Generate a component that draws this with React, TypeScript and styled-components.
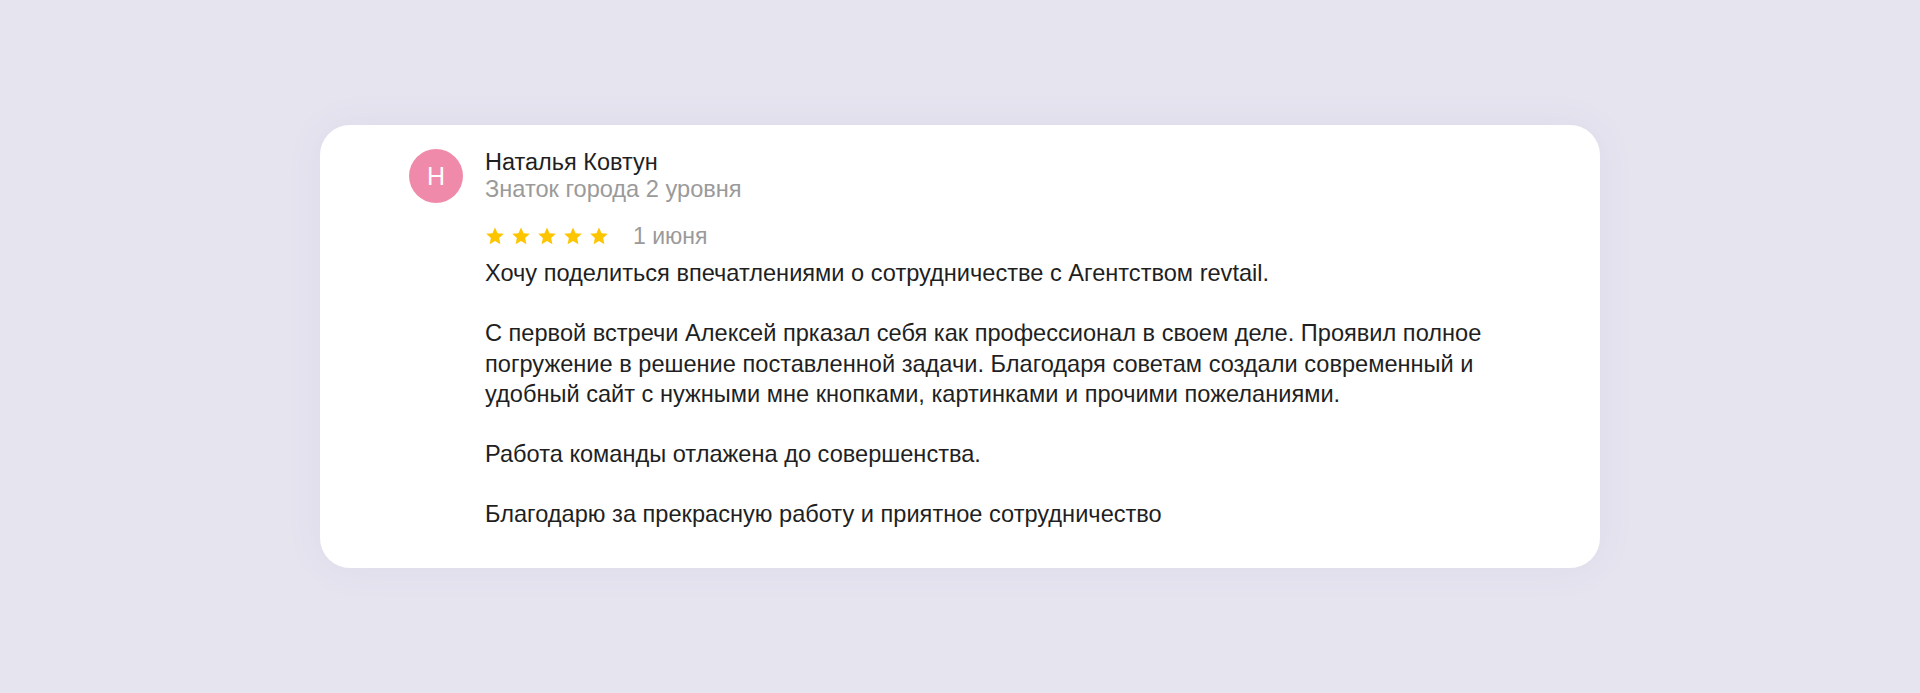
import React from "react";
import styled, { createGlobalStyle } from "styled-components";

const GlobalStyle = createGlobalStyle`
  html, body {
    margin: 0;
    padding: 0;
    background: #e6e4ef;
  }
  * {
    box-sizing: border-box;
  }
`;

const review = {
  author: "Наталья Ковтун",
  initial: "Н",
  level: "Знаток города 2 уровня",
  rating: 5,
  date: "1 июня",
  paragraphs: [
    "Хочу поделиться впечатлениями о сотрудничестве с Агентством revtail.",
    "С первой встречи Алексей прказал себя как профессионал в своем деле. Проявил полное погружение в решение поставленной задачи. Благодаря советам создали современный и удобный сайт с нужными мне кнопками, картинками и прочими пожеланиями.",
    "Работа команды отлажена до совершенства.",
    "Благодарю за прекрасную работу и приятное сотрудничество",
  ],
};

function Star() {
  return (
    <StarSvg viewBox="0 0 24 24">
      <path d="M12 1.8l3.05 6.9 7.5.72-5.66 4.98 1.66 7.36L12 17.9l-6.55 3.86 1.66-7.36L1.45 9.42l7.5-.72z" />
    </StarSvg>
  );
}

export default function App() {
  return (
    <Page>
      <GlobalStyle />
      <Card>
        <Avatar>{review.initial}</Avatar>
        <Body>
          <Author>{review.author}</Author>
          <Level>{review.level}</Level>
          <RatingRow>
            <Stars>
              {Array.from({ length: review.rating }).map((_, i) => (
                <Star key={i} />
              ))}
            </Stars>
            <DateText>{review.date}</DateText>
          </RatingRow>
          <Text>
            {review.paragraphs.map((p, i) => (
              <Paragraph key={i}>{p}</Paragraph>
            ))}
          </Text>
        </Body>
      </Card>
    </Page>
  );
}

const Page = styled.div`
  width: 100%;
  height: 693px;
  display: flex;
  align-items: center;
  justify-content: center;
  background: #e6e4ef;
  font-family: "Liberation Sans", Arial, sans-serif;
`;

const Card = styled.div`
  width: 1280px;
  height: 443px;
  background: #ffffff;
  border-radius: 30px;
  box-shadow: 0 0 40px rgba(90, 80, 140, 0.06);
  padding: 24px 40px 0 89px;
  display: flex;
  align-items: flex-start;
  gap: 22px;
`;

const Avatar = styled.div`
  flex: 0 0 54px;
  width: 54px;
  height: 54px;
  border-radius: 50%;
  background: #f08aab;
  color: #ffffff;
  display: flex;
  align-items: center;
  justify-content: center;
  font-size: 25px;
  line-height: 1;
`;

const Body = styled.div`
  display: flex;
  flex-direction: column;
`;

const Author = styled.div`
  font-size: 23.5px;
  line-height: 27px;
  color: #1f1f1f;
`;

const Level = styled.div`
  font-size: 23.6px;
  line-height: 27px;
  color: #9a9a9a;
`;

const RatingRow = styled.div`
  display: flex;
  align-items: center;
  height: 26px;
  margin-top: 20px;
  gap: 24px;
`;

const Stars = styled.div`
  display: flex;
  gap: 6px;
`;

const StarSvg = styled.svg`
  width: 20px;
  height: 20px;
  fill: #fdc500;
`;

const DateText = styled.span`
  font-size: 23px;
  line-height: 26px;
  color: #9a9a9a;
`;

const Text = styled.div`
  margin-top: 9px;
  width: 1000px;
  display: flex;
  flex-direction: column;
  gap: 30px;
`;

const Paragraph = styled.p`
  margin: 0;
  font-size: 23.6px;
  line-height: 30.3px;
  color: #1f1f1f;
`;
